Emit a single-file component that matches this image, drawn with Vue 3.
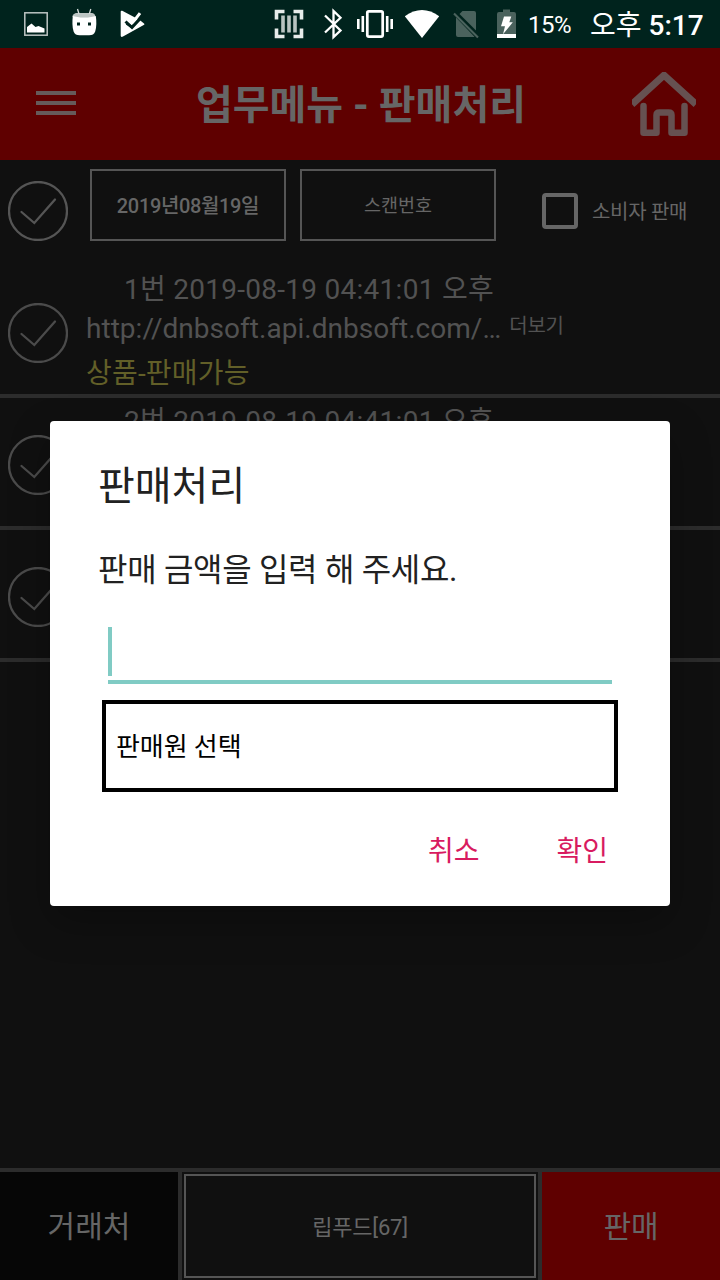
<script setup>
const rows = [
  {
    id: 1,
    time: '1번 2019-08-19 04:41:01 오후',
    link: 'http://dnbsoft.api.dnbsoft.com/…',
    state: '상품-판매가능',
  },
  { id: 2, time: '2번 2019-08-19 04:41:01 오후' },
  { id: 3 },
]
</script>

<template>
  <div class="screen">
    <header class="status">
      <svg class="notif" width="130" height="48" viewBox="0 0 130 48">
        <rect x="2.800" y="12.800" width="22.400" height="22.400" fill="none" stroke="#bcc5c3" stroke-width="1.500" />
        <path d="M5 32.500V27l4.500-3.500 4 3.500 3-1 6 2.500v4z" fill="#fff" />
        <path d="M51 17.500c-1.500-2 1-4.500 4-4.500h14c3 0 5 2 4 4.500z" fill="#bcc5c3" />
        <path d="M55.500 9l1.500 5M68.800 9l-1.500 5" stroke="#d5dbda" stroke-width="1.300" />
        <path d="M50.800 16c4 1.700 19 1.700 23 0 .8 5 .8 11-.6 15.500-1 3-3 3.700-6 3.700h-9.600c-3 0-5-.8-6-3.700-1.400-4.500-1.400-10.500-.8-15.500z" fill="#fff" />
        <path d="M55 22.500h3v3h-3zM66 22.500h3v3h-3z" fill="#00231d" />
        <path d="M98.700 11.800c0-1 1-1.300 2-.8L113 17.500l5 2.700 4 3.200c.7.500.5 1.200-.3 1.600L101 36.600c-1.300.7-2.300.4-2.300-1z" fill="#fff" />
        <path d="M103.500 21.500l6.500 6L123 13.500" fill="none" stroke="#00231d" stroke-width="3" />
        <path d="M108 19l3 3.200 7-9" fill="none" stroke="#fff" stroke-width="3" />
        <path d="M104.500 23.500l5.300 3.500 11-11.500" fill="none" stroke="#00231d" stroke-width="2.500" />
      </svg>
      <svg class="sys" width="250" height="48" viewBox="270 0 250 48">
        <g fill="none" stroke="#e7ecea" stroke-width="3.600">
          <path d="M276.500 19.500v-8h8M293.500 11.500h8v8M301.500 28.500v8h-8M284.500 36.500h-8v-8" />
          <path d="M283 15.500v17M289 15.500v17M295 15.500v17" stroke="#b9c4c1" />
        </g>
        <path d="M325 15.500l15.500 15-7 6.500V11l7 6.800L325 32.500" fill="none" stroke="#fff" stroke-width="2.300" />
        <rect x="367.300" y="11.400" width="15.400" height="25.200" rx="1.500" fill="none" stroke="#fff" stroke-width="2.700" />
        <path d="M358.300 19v10M362.800 16v16M387.200 16v16M391.700 19v10" stroke="#fff" stroke-width="2.600" />
        <path d="M404.800 16.200Q422 4 439.200 16.200L422 38z" fill="#fff" />
        <path d="M462.500 11H474q2 0 2 2v17.500L459.500 14zM456 17.500L474.500 36.700Q474 37 473 37H458q-2 0-2-2z" fill="#4a625d" />
        <path d="M454 13.500l24 24" stroke="#4a625d" stroke-width="2.200" />
        <path d="M503 9.500h7V12h4q2 0 2 2v20h-19V14q0-2 2-2h4z" fill="#4a625d" />
        <path d="M497 34h19v4h-19z" fill="#fff" />
        <path d="M504 16.500h7.300l-2 5.800h3.500L503 34.200l2-8h-4z" fill="#fff" />
      </svg>
      <span class="pct">15%</span>
      <span class="clock">오후 <b>5:17</b></span>
    </header>

    <div class="appbar">
      <div class="burger"><i></i><i></i><i></i></div>
      <h1>업무메뉴 - 판매처리</h1>
      <svg class="home" width="64" height="64" viewBox="0 0 64 64" fill="none" stroke="#665151" stroke-width="6.500">
        <path d="M0 32.300L32 3.200l32 29.100" stroke-width="7" />
        <path d="M11.500 34v26.700h13V43q0-2.500 3-2.500h9q3 0 3 2.500v17.700h13V34" stroke-linecap="round" stroke-linejoin="round" />
      </svg>
    </div>

    <div class="toolbar">
      <svg class="check" width="60" height="60" viewBox="0 0 60 60">
        <circle cx="30" cy="30" r="29" />
        <path d="M13.500 31L26.300 42 47 18.500" />
      </svg>
      <div class="field date">2019년08월19일</div>
      <div class="field scan">스캔번호</div>
      <div class="box"></div>
      <span class="boxlabel">소비자 판매</span>
    </div>

    <main class="list">
      <div v-for="r in rows" :key="r.id" class="row">
        <svg class="check dimmer" width="60" height="60" viewBox="0 0 60 60">
          <circle cx="30" cy="30" r="29" />
          <path d="M13.500 31L26.300 42 47 18.500" />
        </svg>
        <div class="info">
          <div v-if="r.time" class="time">{{ r.time }}</div>
          <div v-if="r.link" class="link"><span>{{ r.link }}</span><small>더보기</small></div>
          <div v-if="r.state" class="state">{{ r.state }}</div>
        </div>
      </div>
    </main>

    <footer class="bottom">
      <div class="client">거래처</div>
      <div class="store"><div>립푸드[67]</div></div>
      <div class="sell">판매</div>
    </footer>

    <section class="dialog">
      <h2>판매처리</h2>
      <p>판매 금액을 입력 해 주세요.</p>
      <div class="amount"><i></i></div>
      <div class="select">판매원 선택</div>
      <div class="actions"><span>취소</span><span>확인</span></div>
    </section>
  </div>
</template>

<style>
body {
  background: #101010;
}
</style>

<style scoped>
.screen {
  position: relative;
  width: 720px;
  height: 1280px;
  overflow: hidden;
  display: flex;
  flex-direction: column;
  background: #101010;
  color: #666;
  font-family: Roboto, "Noto Sans CJK KR", sans-serif;
  white-space: nowrap;
}
svg {
  display: block;
  flex: none;
}
.status {
  height: 48px;
  flex: none;
  display: flex;
  align-items: center;
  background: #00231d;
  color: #fff;
}
.notif {
  margin-left: 22px;
}
.sys {
  margin-left: 118px;
}
.pct {
  width: 44px;
  margin-left: 8px;
  padding-top: 2px;
  font-size: 24px;
  line-height: 46px;
  letter-spacing: -0.5px;
}
.clock {
  margin-left: 18px;
  padding-top: 3px;
  font-size: 28px;
  line-height: 45px;
}
.clock b {
  font-weight: 500;
}
.appbar {
  height: 112px;
  flex: none;
  display: flex;
  align-items: center;
  background: #5f0000;
}
.burger {
  width: 40px;
  margin-left: 36px;
  display: flex;
  flex-direction: column;
  gap: 6px;
  margin-top: -2px;
}
.burger i {
  height: 4px;
  background: #665a5a;
}
h1 {
  flex: 1;
  margin: 0;
  padding: 3px 0 0 14px;
  text-align: center;
  font-size: 40px;
  line-height: 56px;
  font-weight: 700;
}
.home {
  margin-right: 24px;
}
.toolbar {
  height: 106px;
  flex: none;
  display: flex;
}
.check {
  margin: 21px 0 0 8px;
  fill: none;
  stroke: #555;
  stroke-width: 2.3;
  stroke-linecap: round;
}
.field {
  box-sizing: border-box;
  width: 196px;
  height: 72px;
  margin-top: 9px;
  border: 2px solid #555;
  text-align: center;
  font-size: 20px;
  line-height: 70px;
}
.date {
  margin-left: 22px;
  font-weight: 500;
  letter-spacing: -0.35px;
}
.scan {
  margin-left: 14px;
  font-size: 18.5px;
}
.box {
  box-sizing: border-box;
  width: 36px;
  height: 36px;
  margin: 33px 0 0 46px;
  border: 4px solid #666;
  border-radius: 4px;
}
.boxlabel {
  margin: 32px 0 0 14px;
  font-size: 20px;
  line-height: 40px;
  letter-spacing: -0.3px;
}
.list {
  flex: 1;
}
.row {
  box-sizing: border-box;
  height: 132px;
  display: flex;
  border-bottom: 4px solid #2c2c2c;
  color: #525252;
  font-size: 28px;
}
.row .check {
  margin-top: 37px;
}
.row .dimmer {
  stroke: #4b4b4b;
}
.info {
  margin-left: 18px;
  padding-top: 4px;
}
.time {
  padding-left: 38px;
  line-height: 40px;
  letter-spacing: 0.27px;
}
.link {
  display: flex;
  line-height: 38px;
  letter-spacing: 0.03px;
}
.link small {
  margin-left: 8px;
  font-size: 20px;
  line-height: 32px;
  letter-spacing: -0.2px;
}
.state {
  color: #625f28;
  line-height: 52px;
  letter-spacing: 0.2px;
}
.bottom {
  height: 108px;
  flex: none;
  display: grid;
  grid-template-columns: 178px 356px 178px;
  gap: 4px;
  padding-top: 4px;
  background: #2c2c2c;
  font-size: 30px;
  line-height: 110px;
  text-align: center;
}
.client,
.sell {
  height: 108px;
  overflow: hidden;
}
.client {
  background: #060606;
}
.store {
  padding: 2px;
  background: #101010;
}
.store div {
  box-sizing: border-box;
  height: 104px;
  border: 2px solid #555;
  font-size: 22px;
  line-height: 104px;
  letter-spacing: -0.2px;
}
.sell {
  background: #5f0000;
}
.dialog {
  position: absolute;
  left: 50px;
  top: 421px;
  box-sizing: border-box;
  width: 620px;
  height: 485px;
  padding: 38px 48px 0;
  border-radius: 4px;
  background: #fff;
  color: #212121;
  box-shadow: 0 16px 40px rgba(0, 0, 0, 0.28);
}
h2 {
  margin: 0;
  font-size: 40px;
  line-height: 56px;
  font-weight: 400;
}
p {
  margin: 35px 0 0;
  font-size: 32px;
  line-height: 40px;
  letter-spacing: -0.3px;
}
.amount {
  width: 504px;
  height: 53px;
  margin: 37px 0 0 10px;
  border-bottom: 4px solid #80cbc4;
}
.amount i {
  display: block;
  width: 4px;
  height: 49px;
  background: #80cbc4;
}
.select {
  box-sizing: border-box;
  width: 516px;
  height: 92px;
  margin: 16px 0 0 4px;
  padding-left: 10px;
  border: 4px solid #000;
  color: #000;
  font-size: 26px;
  line-height: 86px;
  letter-spacing: -0.1px;
}
.actions {
  display: flex;
  justify-content: flex-end;
  gap: 77px;
  margin-top: 40px;
  padding-right: 14px;
  color: #d81b60;
  font-size: 28px;
  line-height: 40px;
}
</style>
